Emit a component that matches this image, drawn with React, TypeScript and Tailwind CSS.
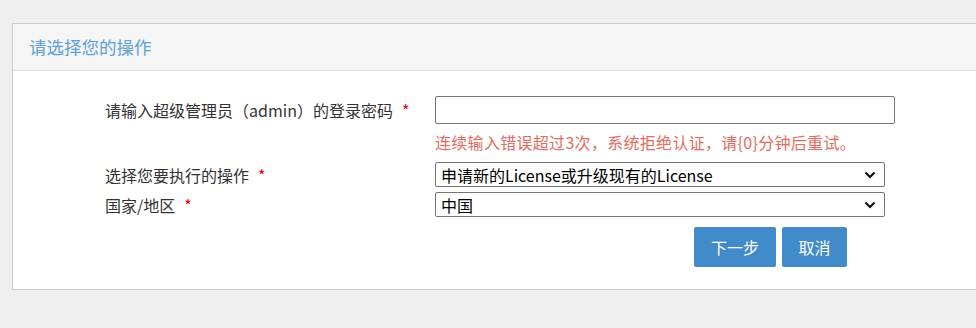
import { useState } from "react";

const font = { fontFamily: '"Noto Sans CJK SC", "Noto Sans", sans-serif' };

const Chevron = () => (
  <svg
    className="pointer-events-none absolute right-[9px] top-1/2 -translate-y-1/2"
    width="12"
    height="8"
    viewBox="0 0 12 8"
    aria-hidden="true"
  >
    <path d="M1.5 1.5 L6 6 L10.5 1.5" fill="none" stroke="#111" strokeWidth="2.2" />
  </svg>
);

const Label = ({ text }: { text: string }) => (
  <div className="w-[330px] shrink-0 text-[16px] leading-[20px] text-[#333]">
    {text}
    <span className="ml-[9px] text-[#e00000]">*</span>
  </div>
);

export default function App() {
  const [password, setPassword] = useState("");
  const [action, setAction] = useState("apply");
  const [region, setRegion] = useState("cn");

  return (
    <div
      className="min-h-screen overflow-hidden bg-[#efefef] pl-[12px] pt-[23px]"
      style={font}
    >
      <div className="w-[1000px] border border-[#cccccc] bg-white">
        {/* header */}
        <div className="flex h-[47px] items-center border-b border-[#dddddd] bg-[#f5f5f5] pl-[16px] text-[17.5px] text-[#5d9fd6]">
          请选择您的操作
        </div>

        {/* body */}
        <div className="pb-[22px] pl-[92px] pt-[25px]">
          <div className="flex items-center">
            <Label text="请输入超级管理员（admin）的登录密码" />
            <input
              type="password"
              value={password}
              onChange={(e) => setPassword(e.target.value)}
              className="h-[28px] w-[460px] rounded-[2px] border border-[#767676] px-[6px] text-[16px] outline-none"
            />
          </div>
          <div className="ml-[330px] mt-[8px] text-[16px] leading-[20px] tracking-[0.3px] text-[#e36b5e]">
            连续输入错误超过3次，系统拒绝认证，请{"{0}"}分钟后重试。
          </div>

          <div className="mt-[10px] flex items-center">
            <Label text="选择您要执行的操作" />
            <div className="relative w-[450px]">
              <select
                value={action}
                onChange={(e) => setAction(e.target.value)}
                className="h-[25px] w-full appearance-none rounded-[2px] border border-[#767676] bg-white pl-[5px] text-[16px] leading-[20px] text-black outline-none"
              >
                <option value="apply">申请新的License或升级现有的License</option>
              </select>
              <Chevron />
            </div>
          </div>

          <div className="mt-[5px] flex items-center">
            <Label text="国家/地区" />
            <div className="relative w-[450px]">
              <select
                value={region}
                onChange={(e) => setRegion(e.target.value)}
                className="h-[25px] w-full appearance-none rounded-[2px] border border-[#767676] bg-white pl-[5px] text-[16px] leading-[20px] text-black outline-none"
              >
                <option value="cn">中国</option>
              </select>
              <Chevron />
            </div>
          </div>

          <div className="ml-[589px] mt-[10px] flex gap-[6px]">
            <button
              type="button"
              className="h-[40px] w-[82px] rounded-[2px] bg-[#428bca] text-[16px] text-white"
            >
              下一步
            </button>
            <button
              type="button"
              className="h-[40px] w-[65px] rounded-[2px] bg-[#428bca] text-[16px] text-white"
            >
              取消
            </button>
          </div>
        </div>
      </div>
    </div>
  );
}
